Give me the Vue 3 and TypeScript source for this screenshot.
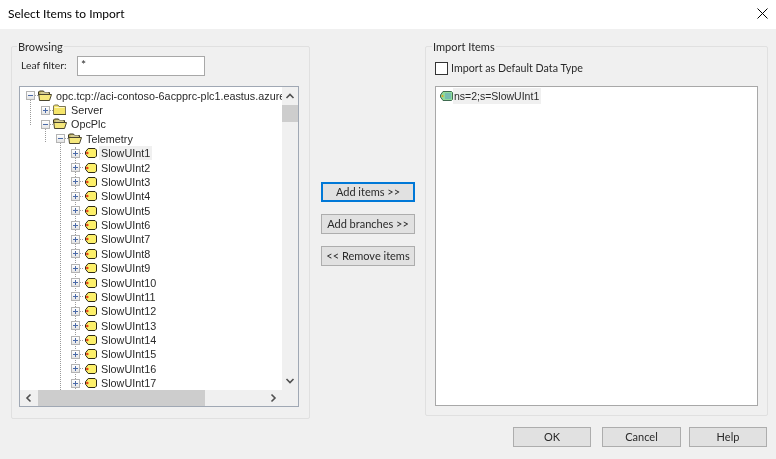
<script setup lang="ts">
interface Row {
  label: string
  depth: number
  kind: 'open' | 'closed' | 'tag'
  selected?: boolean
}

const rows: Row[] = [
  { label: 'opc.tcp://aci-contoso-6acpprc-plc1.eastus.azurecontainer.io:50000', depth: 0, kind: 'open' },
  { label: 'Server', depth: 1, kind: 'closed' },
  { label: 'OpcPlc', depth: 1, kind: 'open' },
  { label: 'Telemetry', depth: 2, kind: 'open' },
  ...Array.from({ length: 17 }, (_, i): Row => ({
    label: `SlowUInt${i + 1}`,
    depth: 3,
    kind: 'tag',
    selected: i === 0,
  })),
]
</script>

<template>
  <div class="dialog">
    <header class="titlebar">
      <span class="title">Select Items to Import</span>
      <svg class="close" width="11" height="11" viewBox="0 0 11 11">
        <path d="M0.5 0.5L10.5 10.5M10.5 0.5L0.5 10.5" stroke="#000" stroke-width="1" fill="none" />
      </svg>
    </header>

    <main class="body">
      <div class="columns">
        <section class="group browse">
          <span class="legend">Browsing</span>
          <div class="filter">
            <label class="filter-label">Leaf filter:</label>
            <div class="input">*</div>
          </div>
          <div class="tree">
            <div class="viewport">
              <div class="guide g0"></div>
              <div class="guide g1"></div>
              <div class="guide g2"></div>
              <div class="guide g3"></div>
              <div
                v-for="row in rows"
                :key="row.label"
                class="row"
                :style="{ paddingLeft: 6 + row.depth * 15 + 'px' }"
              >
                <span class="expander" :class="{ plus: row.kind !== 'open' }"></span>
                <span class="connector"></span>
                <svg v-if="row.kind === 'open'" class="icon" width="14" height="12" viewBox="0 0 14 12">
                  <path d="M0.5 2L1.5 1H5.5L6.5 2.5H11.5V5H0.5Z" fill="#bcae5a" stroke="#3c3826" />
                  <path d="M0.8 4.5H13.5L11.5 10.5H1.5Z" fill="#f5e77c" stroke="#4a4530" />
                  <path d="M2.5 3H10.5" stroke="#efe9c8" />
                </svg>
                <svg v-else-if="row.kind === 'closed'" class="icon" width="14" height="12" viewBox="0 0 14 12">
                  <path d="M0.5 2L1.5 1H5L6 2.5H12.5V10.5H0.5Z" fill="#f5e56a" stroke="#7d7654" />
                  <path d="M1.5 3.5H11.5" stroke="#fdf8c8" />
                  <path d="M1 10.5H13" stroke="#4f4a30" />
                </svg>
                <svg v-else class="icon tag" width="12" height="10" viewBox="0 0 12 10">
                  <path d="M3.2 0.5H10L11.5 2V8L10 9.5H3.2L0.5 6.2V3.8Z" fill="#fdf06a" stroke="#2e2a14" />
                  <circle cx="2.3" cy="5" r="1.3" fill="#e8401c" />
                </svg>
                <span class="label" :class="{ selected: row.selected }">{{ row.label }}</span>
              </div>
            </div>
            <div class="vbar">
              <svg class="arrow" width="16" height="18" viewBox="0 0 16 18">
                <path d="M4.5 11L8 7.5L11.5 11" stroke="#505050" stroke-width="1.6" fill="none" />
              </svg>
              <div class="vthumb"></div>
              <svg class="arrow end" width="16" height="18" viewBox="0 0 16 18">
                <path d="M4.5 7L8 10.5L11.5 7" stroke="#505050" stroke-width="1.6" fill="none" />
              </svg>
            </div>
            <div class="hbar">
              <svg class="arrow" width="18" height="16" viewBox="0 0 18 16">
                <path d="M10.5 4.5L7 8L10.5 11.5" stroke="#505050" stroke-width="1.6" fill="none" />
              </svg>
              <div class="hthumb"></div>
              <svg class="arrow end" width="18" height="16" viewBox="0 0 18 16">
                <path d="M7.5 4.5L11 8L7.5 11.5" stroke="#505050" stroke-width="1.6" fill="none" />
              </svg>
            </div>
            <div class="corner"></div>
          </div>
        </section>

        <div class="actions">
          <button class="btn focused">Add items &gt;&gt;</button>
          <button class="btn">Add branches &gt;&gt;</button>
          <button class="btn">&lt;&lt; Remove items</button>
        </div>

        <section class="group import">
          <span class="legend">Import Items</span>
          <div class="check-row">
            <span class="checkbox"></span>
            <span class="check-text">Import as Default Data Type</span>
          </div>
          <div class="list">
            <div class="list-item">
              <svg width="13" height="10" viewBox="0 0 13 10">
                <path d="M3 0.5H11.5L12.5 1.5V8.5L11.5 9.5H3L0.5 6V4Z" fill="#8fdc9a" stroke="#3f6a50" />
                <path d="M5 3H11M5 5H11M5 7H11" stroke="#5ea0c8" />
                <circle cx="2.5" cy="5" r="1.1" fill="#e8a020" />
              </svg>
              <span class="list-label">ns=2;s=SlowUInt1</span>
            </div>
          </div>
        </section>
      </div>

      <footer class="footer">
        <button class="btn foot">OK</button>
        <button class="btn foot cancel">Cancel</button>
        <button class="btn foot">Help</button>
      </footer>
    </main>
  </div>
</template>

<style>
html, body { margin: 0; background: #f0f0f0; }
</style>

<style scoped>
.dialog {
  width: 776px;
  height: 459px;
  overflow: hidden;
  background: #f0f0f0;
  color: #2a2a2a;
  font-family: Lato, "Open Sans", sans-serif;
  font-size: 11px;
  filter: blur(0.3px);
}
.titlebar {
  height: 29px;
  box-sizing: border-box;
  background: #fff;
  display: flex;
  align-items: center;
  justify-content: space-between;
  padding: 0 8px 2px 8px;
}
.title { font-size: 12px; color: #000; }
.close { display: block; }
.body { padding: 17px 8px 0 11px; }
.columns {
  display: grid;
  grid-template-columns: 299px 115px 343px;
  height: 372px;
}
.group {
  position: relative;
  border: 1px solid #e0e0e0;
  border-radius: 2px;
  box-sizing: border-box;
}
.legend {
  position: absolute;
  top: -8px;
  left: 5px;
  padding: 0 1px;
  line-height: 16px;
  background: #f0f0f0;
}
.import .legend { left: 6px; }
.browse { padding: 9px 10px 11px 7px; }
.filter { display: flex; align-items: center; height: 20px; padding-left: 2px; }
.filter-label { width: 56px; font-size: 10.4px; padding-bottom: 2px; }
.input {
  width: 128px;
  height: 20px;
  box-sizing: border-box;
  background: #fff;
  border: 1px solid #a8a8a8;
  padding-left: 3px;
  line-height: 15px;
  font-size: 12px;
}
.tree {
  margin-top: 10px;
  height: 321px;
  box-sizing: border-box;
  border: 1px solid #a0a8b4;
  display: grid;
  grid-template-columns: 1fr 16px;
  grid-template-rows: 1fr 16px;
  background: #fff;
}
.viewport {
  position: relative;
  overflow: hidden;
  padding-top: 1.5px;
  font-family: "Liberation Sans", Arial, sans-serif;
  font-size: 10.8px;
  white-space: nowrap;
}
.row {
  display: flex;
  align-items: center;
  height: 14.375px;
  position: relative;
}
.expander {
  width: 9px;
  height: 9px;
  flex: none;
  box-sizing: border-box;
  border: 1px solid #b4b4b4;
  background:
    linear-gradient(#4a6aa8, #4a6aa8) center / 5px 1px no-repeat,
    linear-gradient(#fff, #e4e4e4);
}
.expander.plus {
  background:
    linear-gradient(#4a6aa8, #4a6aa8) center / 5px 1px no-repeat,
    linear-gradient(#4a6aa8, #4a6aa8) center / 1px 5px no-repeat,
    linear-gradient(#fff, #e4e4e4);
}
.connector {
  width: 3px;
  flex: none;
  border-top: 1px dotted #a0a0a0;
}
.icon { flex: none; display: block; }
.tag { margin-left: 2px; }
.label {
  margin-left: 2px;
  padding: 0 2px;
  line-height: 14px;
}
.selected { background: #f0f0f0; }
.guide {
  position: absolute;
  width: 0;
  border-left: 1px dotted #9a9a9a;
}
.g0 { left: 10px; top: 13px; height: 25px; }
.g1 { left: 25px; top: 41px; height: 14px; }
.g2 { left: 40px; top: 55px; height: 260px; }
.g3 { left: 55px; top: 60px; height: 260px; }
.vbar {
  background: #f0f0f0;
  display: flex;
  flex-direction: column;
}
.vthumb {
  height: 17px;
  background: #cdcdcd;
  margin: 0;
}
.arrow { display: block; flex: none; }
.arrow.end { margin-top: auto; margin-left: auto; }
.hbar {
  background: #f0f0f0;
  display: flex;
}
.hthumb {
  width: 167px;
  background: #cdcdcd;
}
.corner { background: #f0f0f0; }
.actions {
  display: flex;
  flex-direction: column;
  gap: 12px;
  padding: 136px 0 0 11px;
}
.btn {
  font: inherit;
  color: inherit;
  background: #e1e1e1;
  border: 1px solid #adadad;
  padding: 0 0 2px;
  box-sizing: border-box;
}
.actions .btn { width: 94px; height: 20px; }
.focused { border: 2px solid #0078d7; }
.import { padding: 14px 9px 0 9px; height: 370px; }
.check-row { display: flex; align-items: center; gap: 3px; height: 15px; }
.check-text { font-size: 10.7px; padding-bottom: 2px; }
.checkbox {
  width: 13px;
  height: 13px;
  background: #fff;
  border: 1px solid #333;
  box-sizing: border-box;
}
.list {
  margin-top: 10px;
  height: 320px;
  box-sizing: border-box;
  background: #fff;
  border: 1px solid #a8a8a8;
  padding: 1px 0 0 4px;
}
.list-item { display: flex; align-items: center; height: 16px; }
.list-label {
  width: 88px;
  box-sizing: border-box;
  padding-left: 1px;
  line-height: 16px;
  background: #f0f0f0;
  font-family: "Liberation Sans", Arial, sans-serif;
  font-size: 10.5px;
}
.footer {
  display: flex;
  justify-content: flex-end;
  gap: 8px;
  margin-top: 9px;
  padding-right: 1px;
}
.foot { width: 78px; height: 20px; }
.cancel { width: 79px; margin-left: 3px; }
</style>
